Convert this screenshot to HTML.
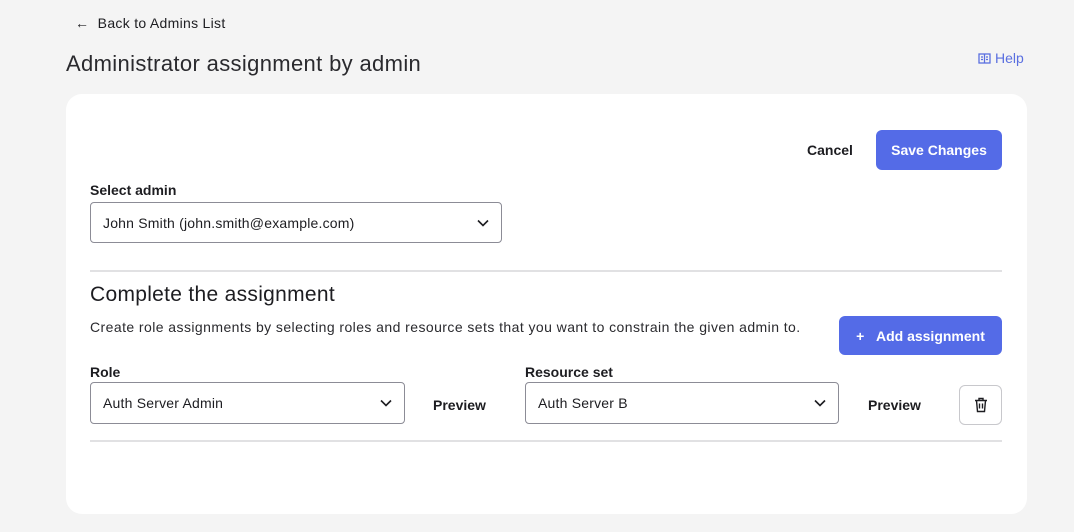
<!DOCTYPE html>
<html><head><style>
*{box-sizing:border-box;margin:0;padding:0}
body{width:1074px;height:532px;background:#f4f4f4;font-family:"Liberation Sans",sans-serif;color:#1d1d21;position:relative;overflow:hidden}
.a{position:absolute}
.sel{position:absolute;border:1px solid #8c8c96;border-radius:4px;background:#fff;font-size:14px;padding-left:12px;display:flex;align-items:center;letter-spacing:0.2px}
.sel svg{position:absolute;right:12px;top:50%;margin-top:-4px}
.lbl{position:absolute;font-size:14px;font-weight:bold}
.btn{position:absolute;background:#546be7;color:#fff;border-radius:6px;font-size:14px;font-weight:bold;display:flex;align-items:center;justify-content:center}
</style></head><body>
<div class="a" style="left:75px;top:15px;font-size:14px;letter-spacing:0.3px">← &nbsp;Back to Admins List</div>
<div class="a" style="left:66px;top:51px;font-size:22px;color:#2a2a2e;letter-spacing:0.35px">Administrator assignment by admin</div>
<div class="a" style="left:978px;top:50px;font-size:14px;color:#5a6fe0;display:flex;align-items:center;gap:4px"><svg width="13" height="11" viewBox="0 0 13 11" fill="none" stroke="#5a6fe0" stroke-width="1.3"><rect x="1" y="1" width="11" height="9"/><line x1="6.5" y1="1" x2="6.5" y2="10"/><line x1="3" y1="4" x2="5" y2="4"/><line x1="8" y1="4" x2="10" y2="4"/><line x1="3" y1="6.5" x2="5" y2="6.5"/><line x1="8" y1="6.5" x2="10" y2="6.5"/></svg>Help</div>
<div class="a" style="left:66px;top:94px;width:961px;height:420px;background:#fff;border-radius:16px"></div>
<div class="a" style="left:807px;top:142px;font-size:14px;font-weight:bold">Cancel</div>
<div class="btn" style="left:876px;top:130px;width:126px;height:40px">Save Changes</div>
<div class="lbl" style="left:90px;top:182px">Select admin</div>
<div class="sel" style="left:90px;top:202px;width:412px;height:41px">John Smith (john.smith@example.com)<svg width="12" height="8" viewBox="0 0 12 8"><path d="M1 1.5l5 5 5-5" fill="none" stroke="#1d1d21" stroke-width="1.6"/></svg></div>
<div class="a" style="left:90px;top:270px;width:912px;height:2px;background:#e1e1e3"></div>
<div class="a" style="left:90px;top:283px;font-size:21px;letter-spacing:0.3px">Complete the assignment</div>
<div class="a" style="left:90px;top:319px;font-size:14px;color:#2a2a2e;letter-spacing:0.43px">Create role assignments by selecting roles and resource sets that you want to constrain the given admin to.</div>
<div class="btn" style="left:839px;top:316px;width:163px;height:39px">+ &nbsp;&nbsp;Add assignment</div>
<div class="lbl" style="left:90px;top:364px">Role</div>
<div class="sel" style="left:90px;top:382px;width:315px;height:42px">Auth Server Admin<svg width="12" height="8" viewBox="0 0 12 8"><path d="M1 1.5l5 5 5-5" fill="none" stroke="#1d1d21" stroke-width="1.6"/></svg></div>
<div class="a" style="left:433px;top:397px;font-size:14px;font-weight:bold">Preview</div>
<div class="lbl" style="left:525px;top:364px">Resource set</div>
<div class="sel" style="left:525px;top:382px;width:314px;height:42px">Auth Server B<svg width="12" height="8" viewBox="0 0 12 8"><path d="M1 1.5l5 5 5-5" fill="none" stroke="#1d1d21" stroke-width="1.6"/></svg></div>
<div class="a" style="left:868px;top:397px;font-size:14px;font-weight:bold">Preview</div>
<div class="a" style="left:959px;top:385px;width:43px;height:40px;border:1px solid #c8c8cc;border-radius:6px;display:flex;align-items:center;justify-content:center"><svg width="14" height="16" viewBox="0 0 14 16" fill="none" stroke="#1d1d21" stroke-width="1.4"><path d="M1 3.5h12M5 3.5V1.5h4v2M2.5 3.5l1 11h7l1-11M5.5 6.5v5M8.5 6.5v5"/></svg></div>
<div class="a" style="left:90px;top:440px;width:912px;height:2px;background:#e1e1e3"></div>
</body></html>
